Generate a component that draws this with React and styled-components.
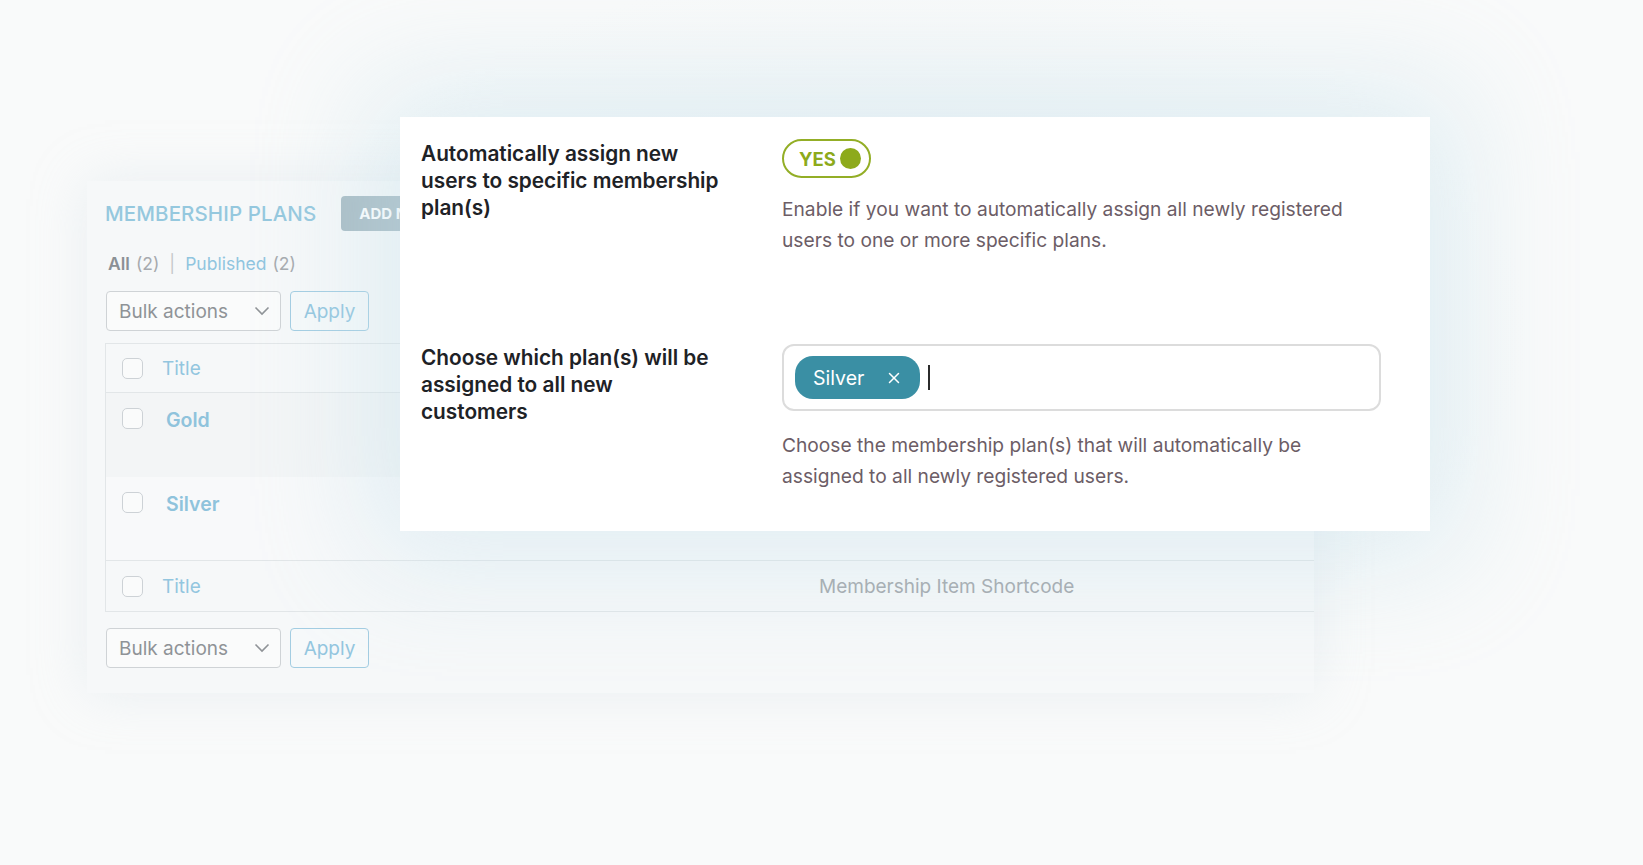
import React from 'react'
import styled, { createGlobalStyle } from 'styled-components'
import { X } from 'lucide-react'

const GlobalStyle = createGlobalStyle`
  html, body {
    margin: 0;
    padding: 0;
    background: #f9fafa;
    font-family: Inter, "Noto Sans", "Liberation Sans", sans-serif;
  }
`

const Page = styled.div`
  position: relative;
  width: 1643px;
  height: 865px;
  overflow: hidden;
  padding: 181px 0 0 87px;
  box-sizing: border-box;
  background: radial-gradient(ellipse 900px 520px at 900px 330px, #eef3f5 0%, #f9fafa 70%);
`

const BackPanel = styled.section`
  width: 1227px;
  height: 512px;
  box-sizing: border-box;
  padding: 15px 0 0 18px;
  background: #f6f8f9;
  box-shadow: 0 0 50px rgba(205, 220, 228, 0.35);
  overflow: hidden;
  color: #a2a6aa;
`

const Header = styled.div`
  display: flex;
  align-items: center;
  gap: 25px;
  height: 35px;
`

const PageTitle = styled.h1`
  margin: 0;
  font-size: 20.5px;
  font-weight: 500;
  color: #95c8de;
  letter-spacing: 0.1px;
`

const AddButton = styled.span`
  display: flex;
  align-items: center;
  height: 35px;
  padding: 0 18px;
  border-radius: 4px;
  background: #a9bcc4;
  color: #fff;
  font-size: 15px;
  font-weight: 700;
`

const Filters = styled.div`
  display: flex;
  align-items: center;
  gap: 6px;
  margin: 21px 0 0 3px;
  font-size: 17.5px;
  line-height: 24px;
  color: #a6aaae;
`

const Strong = styled.b`
  color: #8b9095;
  font-weight: 600;
`

const FilterLink = styled.span`
  color: #90c5df;
`

const Sep = styled.span`
  color: #c6c8cb;
  margin: 0 4px;
`

const Toolbar = styled.div`
  display: flex;
  gap: 9px;
  margin: ${({ top }) => top}px 0 0 1px;
`

const Select = styled.div`
  display: flex;
  align-items: center;
  justify-content: space-between;
  width: ${({ w }) => w || 175}px;
  height: 40px;
  box-sizing: border-box;
  padding: 0 10px 0 12px;
  border: 1px solid #cfd3d6;
  border-radius: 4px;
  background: #fafbfb;
  font-size: 19px;
  color: #8f9397;
`

const ApplyButton = styled.div`
  display: flex;
  align-items: center;
  justify-content: center;
  width: 79px;
  height: 40px;
  box-sizing: border-box;
  border: 1px solid #a3cde2;
  border-radius: 4px;
  background: #f6f9fa;
  font-size: 19px;
  color: #93c6df;
`

const Spacer = styled.div`
  width: 15px;
`

const Table = styled.div`
  margin-top: 12px;
  border: 1px solid #e2e6e8;
  border-right: 0;
`

const Row = styled.div`
  display: grid;
  grid-template-columns: 40px 657px 1fr;
  align-items: ${({ body }) => (body ? 'start' : 'center')};
  height: ${({ h }) => h}px;
  box-sizing: border-box;
  padding: ${({ body }) => (body ? '15px 0 0 16px' : '0 0 0 16px')};
  background: ${({ shade }) => shade || 'transparent'};
  border-bottom: ${({ line }) => (line ? '1px solid #e2e6e8' : '0')};
`

const Check = styled.span`
  display: block;
  width: 21px;
  height: 21px;
  box-sizing: border-box;
  border: 1.5px solid #cdd2d6;
  border-radius: 5px;
  background: #fafbfb;
`

const ColTitle = styled.span`
  font-size: 19px;
  color: #93c6df;
`

const PlanName = styled.span`
  margin-left: 4px;
  font-size: 19.5px;
  font-weight: 600;
  color: #8fc3dc;
`

const ColMuted = styled.span`
  font-size: 19px;
  color: #a3a7ab;
`

const Chevron = () => (
  <svg width="16" height="10" viewBox="0 0 16 10" fill="none">
    <polyline points="1.5,1.5 8,8 14.5,1.5" stroke="#8f9397" strokeWidth="1.6" />
  </svg>
)

const FrontPanel = styled.section`
  position: absolute;
  left: 400px;
  top: 117px;
  width: 1030px;
  height: 414px;
  box-sizing: border-box;
  padding: 23px 49px 0 21px;
  background: #fff;
  box-shadow: 0 0 110px 30px rgba(196, 223, 234, 0.45);
  display: grid;
  grid-template-columns: 361px 1fr;
  grid-template-rows: 204px auto;
`

const Label = styled.h3`
  margin: 0;
  font-size: 20.8px;
  line-height: 27px;
  font-weight: 600;
  color: #1e2226;
`

const Field = styled.div`
  display: flex;
  flex-direction: column;
  align-items: flex-start;
`

const Toggle = styled.div`
  display: flex;
  align-items: center;
  gap: 4px;
  width: 89px;
  height: 39px;
  box-sizing: border-box;
  padding: 0 8px 0 15px;
  border: 2px solid #93ae26;
  border-radius: 20px;
  margin-top: -1px;
  font-size: 18.5px;
  font-weight: 700;
  color: #8daa1b;
`

const Knob = styled.span`
  width: 21px;
  height: 21px;
  border-radius: 50%;
  background: #8daa1b;
`

const Help = styled.p`
  margin: ${({ top }) => top}px 0 0;
  font-size: 19.2px;
  line-height: 30.5px;
  color: #6c5d66;
`

const TagInput = styled.div`
  display: flex;
  align-items: center;
  gap: 8px;
  width: 599px;
  height: 67px;
  box-sizing: border-box;
  padding: 0 11px;
  border: 2px solid #dcdcdc;
  border-radius: 12px;
`

const Chip = styled.span`
  display: flex;
  align-items: center;
  justify-content: space-between;
  width: 125px;
  height: 43px;
  box-sizing: border-box;
  padding: 0 17px 0 18px;
  border-radius: 18px;
  background: #3a8fa4;
  color: #fff;
  font-size: 19.5px;
`

const Caret = styled.span`
  width: 2px;
  height: 25px;
  background: #2b2b2b;
`

export default function App() {
  return (
    <Page>
      <GlobalStyle />
      <BackPanel>
        <Header>
          <PageTitle>MEMBERSHIP PLANS</PageTitle>
          <AddButton>ADD NEW</AddButton>
        </Header>
        <Filters>
          <Strong>All</Strong> (2) <Sep>|</Sep> <FilterLink>Published</FilterLink> (2)
        </Filters>
        <Toolbar top={15}>
          <Select>Bulk actions <Chevron /></Select>
          <ApplyButton>Apply</ApplyButton>
          <Spacer />
          <Select w={150}>All dates <Chevron /></Select>
        </Toolbar>
        <Table>
          <Row line h={49}>
            <Check />
            <ColTitle>Title</ColTitle>
            <ColMuted />
          </Row>
          <Row body h={84} shade="#f3f5f6">
            <Check />
            <PlanName>Gold</PlanName>
            <span />
          </Row>
          <Row body line h={84} shade="#f8f9fa">
            <Check />
            <PlanName>Silver</PlanName>
            <span />
          </Row>
          <Row h={50}>
            <Check />
            <ColTitle>Title</ColTitle>
            <ColMuted>Membership Item Shortcode</ColMuted>
          </Row>
        </Table>
        <Toolbar top={16}>
          <Select>Bulk actions <Chevron /></Select>
          <ApplyButton>Apply</ApplyButton>
        </Toolbar>
      </BackPanel>

      <FrontPanel>
        <Label>
          Automatically assign new
          <br />
          users to specific membership
          <br />
          plan(s)
        </Label>
        <Field>
          <Toggle>YES <Knob /></Toggle>
          <Help top={16}>
            Enable if you want to automatically assign all newly registered
            <br />
            users to one or more specific plans.
          </Help>
        </Field>
        <Label>
          Choose which plan(s) will be
          <br />
          assigned to all new
          <br />
          customers
        </Label>
        <Field>
          <TagInput>
            <Chip>Silver <X size={18} strokeWidth={2} /></Chip>
            <Caret />
          </TagInput>
          <Help top={19}>
            Choose the membership plan(s) that will automatically be
            <br />
            assigned to all newly registered users.
          </Help>
        </Field>
      </FrontPanel>
    </Page>
  )
}
